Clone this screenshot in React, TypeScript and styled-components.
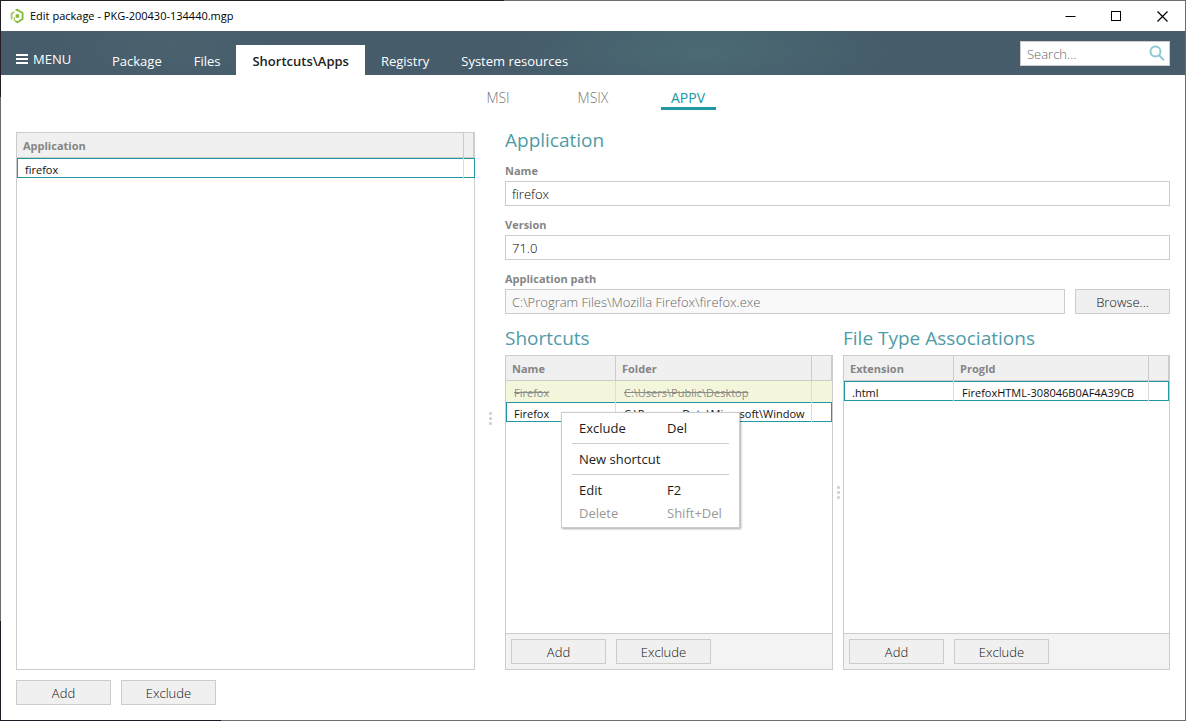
import React from "react";
import styled, { createGlobalStyle, css } from "styled-components";

const teal = "#2097a3";
const line = "#cccccc";

const GlobalStyle = createGlobalStyle`
  *, *::before, *::after { box-sizing: border-box; }
  body { margin: 0; background: #fff; }
  body, button, input, table {
    font-family: "Open Sans", "Noto Sans", sans-serif;
    font-size: 13px;
  }
`;

const WindowFrame = styled.div`
  display: flex;
  min-height: 100vh;
  padding: 1px;
  background:
    linear-gradient(90deg, #231f24 504px, transparent 504px) top / 100% 1px no-repeat,
    linear-gradient(90deg, #1d1a26 221px, transparent 221px) bottom / 100% 1px no-repeat,
    linear-gradient(#231f24 97px, transparent 97px) left / 1px 100% no-repeat,
    linear-gradient(0deg, #1d1a26 100px, transparent 100px) left / 1px 100% no-repeat,
    #6d6d6d;
`;

const Surface = styled.div`
  flex: 1;
  min-width: 0;
  display: flex;
  flex-direction: column;
  background: #fff;
`;

const TitleBar = styled.header`
  display: flex;
  align-items: center;
  height: 30px;
  padding-left: 9px;
`;

const WindowTitle = styled.span`
  flex: 1;
  margin-left: 6px;
  font-size: 11px;
  line-height: 16px;
  color: #000;
`;

const WindowButton = styled.button`
  display: flex;
  align-items: center;
  justify-content: center;
  width: 46px;
  height: 30px;
  padding: 0;
  border: 0;
  background: transparent;
`;

const Ribbon = styled.div`
  display: flex;
  align-items: flex-end;
  height: 44px;
  padding-right: 15px;
  background:
    radial-gradient(ellipse 190px 50px at 700px 20px, #4a6b74, rgba(74, 107, 116, 0)),
    radial-gradient(ellipse 120px 40px at 170px 16px, #4a616e, rgba(74, 97, 110, 0)),
    #465c6a;
`;

const MenuButton = styled.button`
  display: flex;
  align-items: center;
  gap: 5px;
  width: 95px;
  height: 32px;
  padding: 0 0 0 15px;
  border: 0;
  background: transparent;
  color: #fff;
`;

const TabList = styled.nav`
  flex: 1;
  display: flex;
`;

const Tab = styled.button<{ $active?: boolean }>`
  height: 30px;
  padding: 2px 16px 0;
  border: 0;
  background: ${(p) => (p.$active ? "#fff" : "transparent")};
  color: ${(p) => (p.$active ? "#222" : "#fff")};
  font-weight: ${(p) => (p.$active ? 600 : 400)};
  white-space: nowrap;
`;

const SearchBox = styled.label`
  display: flex;
  align-items: center;
  align-self: flex-start;
  width: 150px;
  height: 25px;
  margin-top: 10px;
  padding: 0 4px 0 6px;
  border: 1px solid ${line};
  background: #fff;
`;

const SearchInput = styled.input`
  flex: 1;
  min-width: 0;
  padding: 0;
  border: 0;
  outline: 0;
  background: transparent;
  font-weight: 300;
  &::placeholder { color: #666; opacity: 1; }
`;

const FormatTabs = styled.nav`
  display: flex;
  justify-content: center;
  gap: 40px;
  height: 35px;
`;

const FormatTab = styled.button<{ $active?: boolean }>`
  width: 55px;
  padding: 12px 0 0;
  border: 0;
  border-bottom: 3px solid ${(p) => (p.$active ? teal : "transparent")};
  background: transparent;
  color: ${(p) => (p.$active ? teal : "#777")};
  font-size: 14px;
  font-weight: ${(p) => (p.$active ? 400 : 300)};
`;

const Workspace = styled.main`
  flex: 1;
  display: grid;
  grid-template-columns: minmax(0, 459fr) 30px minmax(0, 665fr);
  padding: 22px 15px 15px;
`;

const ListColumn = styled.section`
  display: flex;
  flex-direction: column;
  gap: 10px;
`;

const Panel = styled.div`
  position: relative;
  flex: 1;
  display: flex;
  flex-direction: column;
  border: 1px solid ${line};
  background: #fff;
`;

const PanelBody = styled.div`
  flex: 1;
`;

const PanelFooter = styled.div`
  display: flex;
  gap: 10px;
  padding: 5px;
  border-top: 1px solid ${line};
  background: #f3f3f3;
`;

const ButtonRow = styled.div`
  display: flex;
  gap: 10px;
`;

const PushButton = styled.button`
  flex: none;
  width: 95px;
  height: 25px;
  padding: 1px 0 0;
  border: 1px solid ${line};
  background: #f0f0f0;
  color: #111;
  font-weight: 300;
  line-height: 22px;
`;

const Grip = styled.div`
  display: flex;
  flex-direction: column;
  align-items: center;
  justify-content: center;
  gap: 2px;
`;

const GripDot = styled.i`
  width: 3px;
  height: 3px;
  border-radius: 1px;
  background: #d2d2d2;
`;

const DetailColumn = styled.section`
  display: flex;
  flex-direction: column;
  padding-bottom: 35px;
`;

const Heading = styled.h2`
  margin: 0;
  color: #4f9ba8;
  font-size: 19px;
  font-weight: 400;
  line-height: 16px;
  white-space: nowrap;
`;

const Fields = styled.div`
  display: flex;
  flex-direction: column;
  gap: 11px;
  margin-top: 15px;
`;

const Field = styled.div`
  display: flex;
  flex-direction: column;
  gap: 2px;
`;

const FieldLabel = styled.label`
  color: #858585;
  font-size: 11px;
  font-weight: 700;
  line-height: 16px;
`;

const FieldRow = styled.div`
  display: flex;
  gap: 10px;
`;

const TextInput = styled.input`
  flex: 1;
  min-width: 0;
  height: 25px;
  padding: 0 6px;
  border: 1px solid ${line};
  background: #fff;
  color: #000;
  font-weight: 300;
  &:read-only {
    background: #f9f9f9;
    color: #666;
  }
`;

const SplitArea = styled.div`
  flex: 1;
  display: grid;
  grid-template-columns: minmax(0, 328fr) 10px minmax(0, 327fr);
`;

const SplitPane = styled.section`
  display: flex;
  flex-direction: column;
  gap: 9px;
  padding-top: 16px;
`;

const DataTable = styled.table`
  width: 100%;
  table-layout: fixed;
  border-collapse: separate;
  border-spacing: 0;
`;

const HeadCell = styled.th<{ $width?: number }>`
  width: ${(p) => (p.$width ? `${p.$width}px` : "auto")};
  height: 25px;
  padding: 1px 6px 0;
  border-right: 1px solid ${line};
  border-bottom: 1px solid ${line};
  background: #f0f0f0;
  color: #858585;
  font-size: 11px;
  font-weight: 700;
  line-height: 23px;
  text-align: left;
`;

const FillerCell = styled(HeadCell)`
  padding: 0;
`;

const CellText = styled.div`
  height: 20px;
  padding: 3px 2px 0 8px;
  border: 0 solid transparent;
  border-width: 1px 0;
  font-size: 11px;
  line-height: 15px;
  white-space: nowrap;
  overflow: hidden;
`;

const BodyCell = styled.td`
  height: 21px;
  padding: 0;
  border-right: 1px solid #dcdcdc;
  vertical-align: top;
  &:last-child { border-right: 0; }
`;

const BodyRow = styled.tr<{ $excluded?: boolean; $selected?: boolean }>`
  color: #111;
  ${(p) =>
    p.$excluded &&
    css`
      background: #f4f6dc;
      color: #8c8c86;
      text-decoration: line-through;
    `}
  ${(p) =>
    p.$selected &&
    css`
      ${CellText} { border-color: ${teal}; }
      ${BodyCell}:first-child ${CellText} { border-left-width: 1px; padding-left: 7px; }
      ${BodyCell}:last-child ${CellText} { border-right-width: 1px; }
    `}
`;

const ContextMenu = styled.div`
  position: absolute;
  z-index: 2;
  top: 56px;
  left: 55px;
  width: 179px;
  padding: 4px 0 2px;
  border: 1px solid ${line};
  background: #fff;
  box-shadow: 1px 1px 2px rgba(0, 0, 0, 0.35);
`;

const MenuItem = styled.button`
  display: grid;
  grid-template-columns: 88px 1fr;
  width: 100%;
  padding: 0 0 0 17px;
  border: 0;
  background: transparent;
  color: #1c1c1c;
  line-height: 23px;
  text-align: left;
  white-space: nowrap;
  &:disabled { color: #999; }
`;

const MenuDivider = styled.hr`
  height: 1px;
  margin: 3px 10px 4px;
  border: 0;
  background: ${line};
`;

const HamburgerIcon = () => (
  <svg width="12" height="10" viewBox="0 0 12 10" fill="#fff" aria-hidden="true">
    <rect width="12" height="2" />
    <rect y="4" width="12" height="2" />
    <rect y="8" width="12" height="2" />
  </svg>
);

const LogoIcon = () => (
  <svg width="14" height="16" viewBox="0 0 14 16" fill="none" stroke="#86b83c" strokeWidth="1.8" aria-hidden="true">
    <path d="M1.6 11.4V5.6L4.4 3.9" stroke="#a5cb62" />
    <path d="M5.6 2.3 7.2 1.7 12.6 4.9V11L7.4 14.2 5.2 13" />
    <path d="M4.4 13V9" stroke="#a5cb62" strokeWidth="1.2" />
    <circle cx="7.4" cy="7.9" r="2" fill="#86b83c" stroke="none" />
  </svg>
);

const SearchIcon = () => (
  <svg width="17" height="17" viewBox="0 0 17 17" fill="none" stroke="#8ccbd3" strokeWidth="2" aria-hidden="true">
    <circle cx="7.5" cy="6.5" r="5" />
    <path d="M11.1 10.2 16 15.2" />
  </svg>
);

const MinimizeIcon = () => (
  <svg width="11" height="11" viewBox="0 0 11 11" stroke="#000" fill="none" aria-hidden="true">
    <path d="M0.5 5.5H10.5" />
  </svg>
);

const MaximizeIcon = () => (
  <svg width="11" height="11" viewBox="0 0 11 11" stroke="#000" fill="none" aria-hidden="true">
    <rect x="0.5" y="0.5" width="9" height="9" />
  </svg>
);

const CloseIcon = () => (
  <svg width="11" height="11" viewBox="0 0 11 11" stroke="#000" strokeWidth="1.2" fill="none" aria-hidden="true">
    <path d="M0.5 0.5 10.5 10.5M10.5 0.5 0.5 10.5" />
  </svg>
);

const Splitter = () => (
  <Grip role="separator" aria-orientation="vertical">
    <GripDot />
    <GripDot />
    <GripDot />
  </Grip>
);

type Column = { title: string; width?: number };
type Row = { cells: string[]; excluded?: boolean; selected?: boolean };

const Grid = ({ columns, rows, fillerWidth }: { columns: Column[]; rows: Row[]; fillerWidth: number }) => (
  <DataTable>
    <thead>
      <tr>
        {columns.map((c) => (
          <HeadCell key={c.title} scope="col" $width={c.width}>
            {c.title}
          </HeadCell>
        ))}
        <FillerCell as="td" $width={fillerWidth} />
      </tr>
    </thead>
    <tbody>
      {rows.map((r) => (
        <BodyRow key={r.cells.join()} $excluded={r.excluded} $selected={r.selected}>
          {r.cells.map((text) => (
            <BodyCell key={text}>
              <CellText>{text}</CellText>
            </BodyCell>
          ))}
          <BodyCell>
            <CellText />
          </BodyCell>
        </BodyRow>
      ))}
    </tbody>
  </DataTable>
);

const tabs = ["Package", "Files", "Shortcuts\\Apps", "Registry", "System resources"];
const formats = ["MSI", "MSIX", "APPV"];

export default function App() {
  return (
    <>
      <GlobalStyle />
      <WindowFrame>
        <Surface>
          <TitleBar>
            <LogoIcon />
            <WindowTitle>Edit package - PKG-200430-134440.mgp</WindowTitle>
            <WindowButton aria-label="Minimize"><MinimizeIcon /></WindowButton>
            <WindowButton aria-label="Maximize"><MaximizeIcon /></WindowButton>
            <WindowButton aria-label="Close"><CloseIcon /></WindowButton>
          </TitleBar>

          <Ribbon>
            <MenuButton>
              <HamburgerIcon />
              MENU
            </MenuButton>
            <TabList>
              {tabs.map((t) => (
                <Tab key={t} $active={t === "Shortcuts\\Apps"}>{t}</Tab>
              ))}
            </TabList>
            <SearchBox>
              <SearchInput type="text" placeholder="Search..." aria-label="Search" />
              <SearchIcon />
            </SearchBox>
          </Ribbon>

          <FormatTabs>
            {formats.map((f) => (
              <FormatTab key={f} $active={f === "APPV"}>{f}</FormatTab>
            ))}
          </FormatTabs>

          <Workspace>
            <ListColumn>
              <Panel>
                <Grid
                  columns={[{ title: "Application" }]}
                  fillerWidth={10}
                  rows={[{ cells: ["firefox"], selected: true }]}
                />
              </Panel>
              <ButtonRow>
                <PushButton>Add</PushButton>
                <PushButton>Exclude</PushButton>
              </ButtonRow>
            </ListColumn>

            <Splitter />

            <DetailColumn>
              <Heading>Application</Heading>
              <Fields>
                <Field>
                  <FieldLabel htmlFor="name">Name</FieldLabel>
                  <FieldRow><TextInput id="name" type="text" defaultValue="firefox" /></FieldRow>
                </Field>
                <Field>
                  <FieldLabel htmlFor="version">Version</FieldLabel>
                  <FieldRow><TextInput id="version" type="text" defaultValue="71.0" /></FieldRow>
                </Field>
                <Field>
                  <FieldLabel htmlFor="path">Application path</FieldLabel>
                  <FieldRow>
                    <TextInput
                      id="path"
                      type="text"
                      readOnly
                      value={"C:\\Program Files\\Mozilla Firefox\\firefox.exe"}
                    />
                    <PushButton>Browse...</PushButton>
                  </FieldRow>
                </Field>
              </Fields>

              <SplitArea>
                <SplitPane>
                  <Heading>Shortcuts</Heading>
                  <Panel>
                    <PanelBody>
                      <Grid
                        columns={[{ title: "Name", width: 110 }, { title: "Folder" }]}
                        fillerWidth={20}
                        rows={[
                          { cells: ["Firefox", "C:\\Users\\Public\\Desktop"], excluded: true },
                          { cells: ["Firefox", "C:\\ProgramData\\Microsoft\\Window"], selected: true },
                        ]}
                      />
                    </PanelBody>
                    <PanelFooter>
                      <PushButton>Add</PushButton>
                      <PushButton>Exclude</PushButton>
                    </PanelFooter>
                    <ContextMenu role="menu">
                      <MenuItem role="menuitem"><span>Exclude</span><span>Del</span></MenuItem>
                      <MenuDivider />
                      <MenuItem role="menuitem"><span>New shortcut</span></MenuItem>
                      <MenuDivider />
                      <MenuItem role="menuitem"><span>Edit</span><span>F2</span></MenuItem>
                      <MenuItem role="menuitem" disabled><span>Delete</span><span>Shift+Del</span></MenuItem>
                    </ContextMenu>
                  </Panel>
                </SplitPane>

                <Splitter />

                <SplitPane>
                  <Heading>File Type Associations</Heading>
                  <Panel>
                    <PanelBody>
                      <Grid
                        columns={[{ title: "Extension", width: 110 }, { title: "ProgId" }]}
                        fillerWidth={20}
                        rows={[{ cells: [".html", "FirefoxHTML-308046B0AF4A39CB"], selected: true }]}
                      />
                    </PanelBody>
                    <PanelFooter>
                      <PushButton>Add</PushButton>
                      <PushButton>Exclude</PushButton>
                    </PanelFooter>
                  </Panel>
                </SplitPane>
              </SplitArea>
            </DetailColumn>
          </Workspace>
        </Surface>
      </WindowFrame>
    </>
  );
}
